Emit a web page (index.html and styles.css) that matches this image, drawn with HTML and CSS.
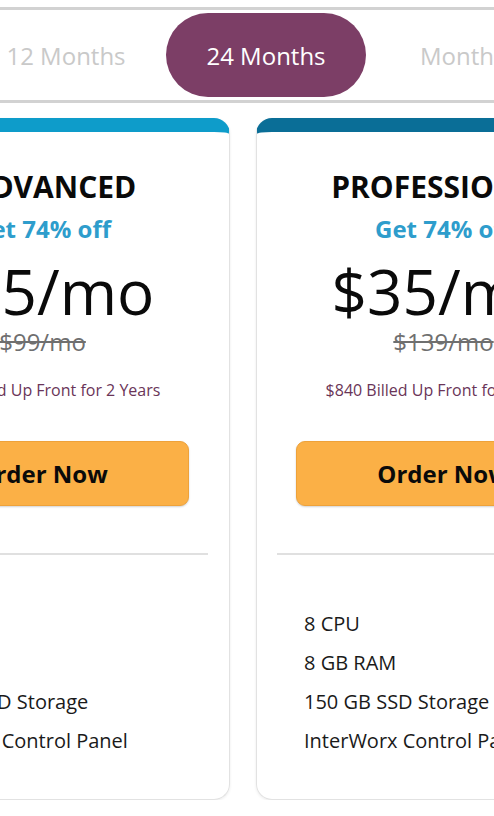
FILE: index.html
```html
<!DOCTYPE html>
<html lang="en">
<head>
<meta charset="utf-8">
<title>Pricing</title>
<link rel="stylesheet" href="styles.css">
</head>
<body>
<div class="page">
  <div class="toggle">
    <div class="toggle-item">12 Months</div>
    <div class="toggle-item active">24 Months</div>
    <div class="toggle-item">Monthly</div>
  </div>
  <div class="cards">
    <div class="card card-advanced">
      <h2 class="plan-name">ADVANCED</h2>
      <div class="discount">Get 74% off</div>
      <div class="price">$25/mo</div>
      <div class="old-price">$99/mo</div>
      <div class="billed">$600 Billed Up Front for 2 Years</div>
      <a class="order-btn">Order Now</a>
      <hr class="divider">
      <ul class="features">
        <li>4 CPU</li>
        <li>4 GB RAM</li>
        <li>100 GB SSD Storage</li>
        <li>InterWorx Control Panel</li>
      </ul>
    </div>
    <div class="card card-professional">
      <h2 class="plan-name">PROFESSIONAL</h2>
      <div class="discount">Get 74% off</div>
      <div class="price">$35/mo</div>
      <div class="old-price">$139/mo</div>
      <div class="billed">$840 Billed Up Front for 2 Years</div>
      <a class="order-btn">Order Now</a>
      <hr class="divider">
      <ul class="features">
        <li>8 CPU</li>
        <li>8 GB RAM</li>
        <li>150 GB SSD Storage</li>
        <li>InterWorx Control Panel</li>
      </ul>
    </div>
  </div>
</div>
</body>
</html>
```
FILE: styles.css
```css
html, body {
  margin: 0;
  padding: 0;
  background: #ffffff;
  overflow: hidden;
}
body {
  font-family: "Open Sans", "Liberation Sans", sans-serif;
  color: #111;
}
.page {
  margin-left: -145px;
  width: 1000px;
  padding-top: 7px;
}
.toggle {
  margin-left: 105px;
  width: 600px;
  display: flex;
  border: 3px solid #d2d2d2;
  border-radius: 40px;
  padding: 3px;
}
.toggle-item {
  flex: 0 0 200px;
  height: 84px;
  display: flex;
  align-items: center;
  justify-content: center;
  font-size: 24px;
  color: #c9c9c9;
  border-radius: 42px;
}
.toggle-item.active {
  background: #7c3e66;
  color: #ffffff;
}
.cards {
  display: flex;
  gap: 26px;
  margin-top: 15px;
}
.card {
  flex: 0 0 375px;
  box-sizing: border-box;
  height: 682px;
  border: 1px solid #e2e2e2;
  border-top: 14px solid #0e9cca;
  border-radius: 16px;
  box-shadow: 0 1px 3px rgba(0,0,0,0.08);
  text-align: center;
  padding-top: 35px;
}
.card-professional {
  border-top-color: #0a6e97;
}
.plan-name {
  margin: 0;
  font-size: 30px;
  line-height: 40px;
  font-weight: 700;
  color: #0a0a0a;
}
.card-advanced .plan-name {
  padding-left: 22px;
}
.discount {
  margin-top: 7px;
  font-size: 24px;
  line-height: 30px;
  font-weight: 700;
  color: #2e9dcc;
}
.price {
  margin-top: 12px;
  font-size: 62px;
  line-height: 70px;
  color: #0a0a0a;
}
.old-price {
  margin-top: 1px;
  font-size: 24px;
  line-height: 30px;
  color: #6f6f6f;
  text-decoration: line-through;
}
.billed {
  margin-top: 23px;
  font-size: 16px;
  line-height: 20px;
  color: #6a3558;
}
.order-btn {
  display: flex;
  align-items: center;
  justify-content: center;
  box-sizing: border-box;
  margin: 41px 40px 0 39px;
  height: 65px;
  background: #fbb046;
  border: 1px solid #eea23a;
  border-radius: 9px;
  box-shadow: 0 1px 2px rgba(0,0,0,0.18);
  font-size: 24px;
  font-weight: 700;
  color: #0a0a0a;
}
.divider {
  margin: 47px 21px 0 20px;
  border: 0;
  height: 2px;
  background: #e0e0e0;
}
.features {
  list-style: none;
  margin: 49px 0 0 0;
  padding: 0 0 0 47px;
  text-align: left;
}
.features li {
  font-size: 20px;
  line-height: 39px;
  color: #1a1a1a;
}
```
